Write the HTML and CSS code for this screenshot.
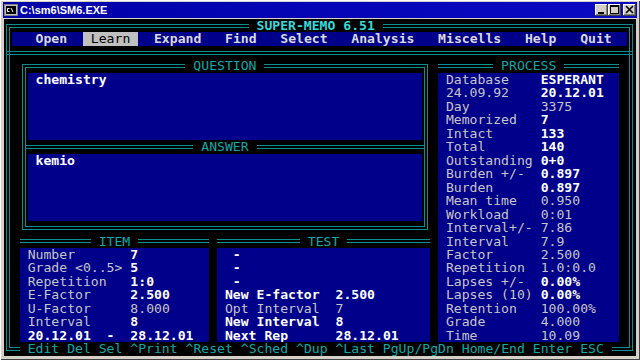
FILE: index.html
```html
<!DOCTYPE html>
<html lang="en">
<head>
  <meta charset="UTF-8">
  <meta name="viewport" content="width=device-width, initial-scale=1.0">
  <title>SM6.EXE</title>
  <link rel="stylesheet" href="styles.css">
</head>
<body>
  <div class="window">
    <div class="titlebar">
      <svg class="app-icon" width="14" height="12" viewBox="0 0 14 12">
        <rect x="0.5" y="0.5" width="13" height="11" fill="#c0c0c0" stroke="#808080"/>
        <rect x="2" y="2" width="10" height="8" fill="#000"/>
        <path d="M3.5 4.5h2M3.5 4.5v3h2M7 4l2 4" stroke="#fff" fill="none"/>
      </svg>
      <span class="caption">C:\sm6\SM6.EXE</span>
      <div class="caption-buttons">
        <span class="cbtn"><svg width="13" height="12" viewBox="0 0 13 12"><rect x="3" y="8" width="6" height="2" fill="#000"/></svg></span>
        <span class="cbtn"><svg width="13" height="12" viewBox="0 0 13 12"><rect x="2.5" y="1.5" width="8" height="8" fill="none" stroke="#000"/><rect x="2" y="1" width="9" height="2" fill="#000"/></svg></span>
        <span class="cbtn close"><svg width="13" height="12" viewBox="0 0 13 12"><path d="M3 2l7 7M10 2l-7 7" stroke="#000" stroke-width="1.6"/></svg></span>
      </div>
    </div>

    <main class="screen">
      <div class="frame"></div>
      <h1 class="app-name">SUPER-MEMO 6.51</h1>

      <nav class="menu">
        <span>Open</span>
        <span class="active">Learn</span>
        <span>Expand</span>
        <span>Find</span>
        <span>Select</span>
        <span>Analysis</span>
        <span>Miscells</span>
        <span>Help</span>
        <span>Quit</span>
      </nav>
      <div class="rule"></div>

      <section class="qa">
        <div class="cap"><span>QUESTION</span></div>
        <div class="field">chemistry</div>
        <div class="head"><span>ANSWER</span></div>
        <div class="field">kemio</div>
      </section>

      <section class="panel process">
        <div class="head"><span>PROCESS</span></div>
        <div class="body">
          <div class="row"><span class="k">Database</span><span class="hi">ESPERANT</span></div>
          <div class="row"><span class="k">24.09.92</span><span class="hi">20.12.01</span></div>
          <div class="row"><span class="k">Day</span><span>3375</span></div>
          <div class="row"><span class="k">Memorized</span><span class="hi">7</span></div>
          <div class="row"><span class="k">Intact</span><span class="hi">133</span></div>
          <div class="row"><span class="k">Total</span><span class="hi">140</span></div>
          <div class="row"><span class="k">Outstanding</span><span class="hi">0+0</span></div>
          <div class="row"><span class="k">Burden +/-</span><span class="hi">0.897</span></div>
          <div class="row"><span class="k">Burden</span><span class="hi">0.897</span></div>
          <div class="row"><span class="k">Mean time</span><span>0.950</span></div>
          <div class="row"><span class="k">Workload</span><span>0:01</span></div>
          <div class="row"><span class="k">Interval+/-</span><span>7.86</span></div>
          <div class="row"><span class="k">Interval</span><span>7.9</span></div>
          <div class="row"><span class="k">Factor</span><span>2.500</span></div>
          <div class="row"><span class="k">Repetition</span><span>1.0:0.0</span></div>
          <div class="row"><span class="k">Lapses +/-</span><span class="hi">0.00%</span></div>
          <div class="row"><span class="k">Lapses (10)</span><span class="hi">0.00%</span></div>
          <div class="row"><span class="k">Retention</span><span>100.00%</span></div>
          <div class="row"><span class="k">Grade</span><span>4.000</span></div>
          <div class="row"><span class="k">Time</span><span>10.09</span></div>
        </div>
      </section>

      <section class="panel item">
        <div class="head"><span>ITEM</span></div>
        <div class="body">
          <div class="row"><span class="k">Number</span><span class="hi">7</span></div>
          <div class="row"><span class="k">Grade &lt;0..5&gt;</span><span class="hi">5</span></div>
          <div class="row"><span class="k">Repetition</span><span class="hi">1:0</span></div>
          <div class="row"><span class="k">E-Factor</span><span class="hi">2.500</span></div>
          <div class="row"><span class="k">U-Factor</span><span>8.000</span></div>
          <div class="row"><span class="k">Interval</span><span class="hi">8</span></div>
          <div class="row"><span class="k hi">20.12.01  -</span><span class="hi">28.12.01</span></div>
        </div>
      </section>

      <section class="panel test">
        <div class="head"><span>TEST</span></div>
        <div class="body">
          <div class="row"><span class="k hi"> -</span></div>
          <div class="row"><span class="k hi"> -</span></div>
          <div class="row"><span class="k hi"> -</span></div>
          <div class="row"><span class="k hi">New E-factor</span><span class="hi">2.500</span></div>
          <div class="row"><span class="k">Opt Interval</span><span>7</span></div>
          <div class="row"><span class="k hi">New Interval</span><span class="hi">8</span></div>
          <div class="row"><span class="k hi">Next Rep</span><span class="hi">28.12.01</span></div>
        </div>
      </section>

      <footer class="keys">Edit Del Sel ^Print ^Reset ^Sched ^Dup ^Last PgUp/PgDn Home/End Enter ESC</footer>
    </main>
  </div>
</body>
</html>
```

FILE: styles.css
```css
/* text-mode screen: 80 x 25 cells */
:root {
  --cw: 7.9px;
  --rh: 13.48px;
  --line: #0a8f8f;
  --teal: #10a8a8;
  --blue: #00008a;
  --gray: #c6c6c6;
}
body {
  margin: 0;
  background: #d4d0c8;
}
.window {
  width: 640px;
  height: 360px;
  box-sizing: border-box;
  padding: 2px 3px 4px;
  background: #d4d0c8;
  box-shadow: inset 1px 1px #ffffff, inset -1px -1px #404040;
}
.titlebar {
  display: flex;
  align-items: center;
  height: 16px;
  padding: 0 1px;
  background: linear-gradient(90deg, #0000a8, #0a0ac4);
  color: #fff;
  font: bold 11px "Liberation Sans", Arial, sans-serif;
}
.app-icon {
  margin-right: 2px;
}
.caption-buttons {
  display: flex;
  margin-left: auto;
}
.cbtn {
  display: block;
  width: 13px;
  height: 12px;
  background: #d4d0c8;
  box-shadow: inset -1px -1px #404040, inset 1px 1px #ffffff, inset -2px -2px #808080;
}
.cbtn svg {
  display: block;
}
.cbtn.close {
  margin-left: 2px;
}

.screen {
  display: grid;
  grid-template-columns: repeat(80, var(--cw));
  grid-template-rows: repeat(25, var(--rh));
  margin: 1px 1px 0;
  background: #000;
  color: var(--gray);
  font-family: "DejaVu Sans Mono", monospace;
  font-size: 13.12px;
  line-height: var(--rh);
}
.hi {
  color: #fff;
  font-weight: bold;
}
.frame {
  grid-area: 1 / 1 / 26 / 81;
  margin: calc(var(--rh) / 2 - 2px) calc(var(--cw) / 2 - 2px);
  border: 4px double var(--line);
}
.app-name {
  grid-area: 1 / 32 / 2 / 49;
  margin: 0;
  background: #000;
  color: #3ad8d8;
  font-size: inherit;
  font-weight: bold;
  text-align: center;
}
.menu {
  grid-area: 2 / 2 / 3 / 80;
  display: flex;
  gap: var(--cw);
  padding-left: calc(2 * var(--cw));
  background: var(--blue);
  color: #dadada;
  font-weight: bold;
}
.menu span {
  padding: 0 var(--cw);
}
.menu .active {
  background: #c0c0c0;
  color: #000;
  font-weight: normal;
}
.rule {
  grid-area: 3 / 1 / 4 / 81;
  align-self: center;
  margin: 0 calc(var(--cw) / 2 - 2px);
  border-top: 4px double var(--line);
}

.head {
  display: flex;
  align-items: center;
  height: var(--rh);
  color: var(--teal);
}
.head::before,
.head::after {
  content: "";
  flex: 1;
  border-top: 4px double var(--line);
}
.head span {
  padding: 0 var(--cw);
}

.qa {
  grid-area: 4 / 3 / 17 / 55;
  margin: calc(var(--rh) / 2 - 2px) calc(var(--cw) / 2 - 2px);
  padding: calc(var(--rh) / 2 - 2px) calc(var(--cw) / 2 - 2px);
  border: 4px double var(--line);
}
.qa .cap {
  height: var(--rh);
  margin-top: calc(-1 * var(--rh));
  text-align: center;
  color: var(--teal);
}
.qa .cap span {
  display: inline-block;
  height: var(--rh);
  padding: 0 var(--cw);
  background: #000;
}
.qa .head {
  margin: 0 calc(2px - var(--cw) / 2);
}
.field {
  height: calc(5 * var(--rh));
  padding-left: var(--cw);
  background: var(--blue);
  color: #fff;
  font-weight: bold;
}

.panel {
  display: flex;
  flex-direction: column;
}
.panel .body {
  flex: 1;
  padding-left: var(--cw);
  background: var(--blue);
}
.row {
  display: flex;
  height: var(--rh);
}
.row .k {
  flex: none;
  width: calc(var(--label) * var(--cw));
  white-space: pre;
}
.process {
  grid-area: 4 / 56 / 25 / 79;
  --label: 12;
}
.item {
  grid-area: 17 / 3 / 25 / 27;
  --label: 13;
}
.test {
  grid-area: 17 / 28 / 25 / 55;
  --label: 14;
}

.keys {
  grid-area: 25 / 3 / 26 / 78;
  padding-left: var(--cw);
  background: #000;
  color: var(--teal);
  white-space: pre;
}
```
